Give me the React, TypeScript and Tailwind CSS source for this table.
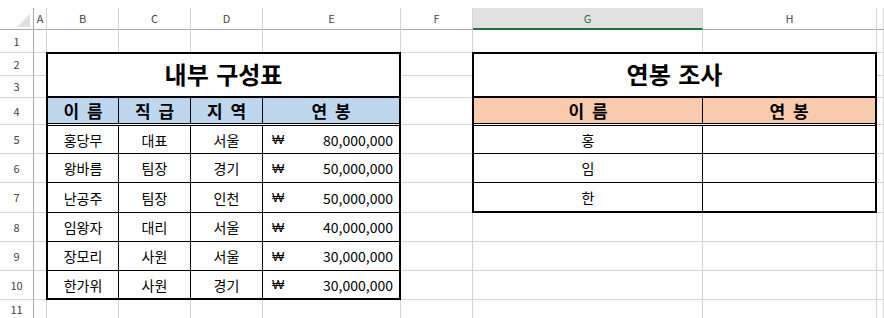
import React from "react";

const COL_START = [
  "col-start-1", "col-start-2", "col-start-3", "col-start-4", "col-start-5",
  "col-start-6", "col-start-7", "col-start-8", "col-start-9", "col-start-10",
];
const ROW_START = [
  "row-start-1", "row-start-2", "row-start-3", "row-start-4", "row-start-5", "row-start-6",
  "row-start-7", "row-start-8", "row-start-9", "row-start-10", "row-start-11", "row-start-12",
];

const LETTERS = ["A", "B", "C", "D", "E", "F", "G", "H", ""];
const ROWS = 11;

const staff = [
  { name: "홍당무", title: "대표", region: "서울", pay: "80,000,000" },
  { name: "왕바름", title: "팀장", region: "경기", pay: "50,000,000" },
  { name: "난공주", title: "팀장", region: "인천", pay: "50,000,000" },
  { name: "임왕자", title: "대리", region: "서울", pay: "40,000,000" },
  { name: "장모리", title: "사원", region: "서울", pay: "30,000,000" },
  { name: "한가위", title: "사원", region: "경기", pay: "30,000,000" },
];
// body row heights (incl. bottom border) so the lines fall on the sheet grid
const leftHeights = ["h-[28px]", "h-[29px]", "h-[30px]", "h-[29px]", "h-[29px]", "h-[27px]"];

const survey = ["홍", "임", "한"];
const rightHeights = ["h-[28px]", "h-[29px]", "h-[28px]"];

export default function App() {
  return (
    <div
      className="w-[884px] h-[318px] overflow-hidden bg-white text-black
                 font-['Noto_Sans_CJK_KR','Noto_Sans',sans-serif]
                 grid grid-cols-[34px_13px_72px_72px_72px_138px_72px_230px_174px_1fr]
                 grid-rows-[30px_23px_23px_22px_27px_29px_29px_30px_29px_29px_29px_18px]"
    >
      {/* corner */}
      <div className="col-start-1 row-start-1 flex flex-col">
        <div className="mt-2 flex-1 flex items-end justify-end pr-[3px] pb-[2px] border-r border-b border-[#ababab]">
          <svg width="13" height="13" viewBox="0 0 13 13">
            <polygon points="13,0 13,13 0,13" fill="#dfdfdf" />
          </svg>
        </div>
      </div>

      {/* column headings */}
      {LETTERS.map((l, i) => (
        <div key={"h" + i} className={`${COL_START[i + 1]} row-start-1 flex flex-col`}>
          <div
            className={
              l === "G"
                ? "mt-2 flex-1 flex items-center justify-center text-[11px] text-[#217346] bg-[#e1e1e1] border-r border-[#d4d4d4] border-b-2 border-b-[#217346]"
                : "mt-2 flex-1 flex items-center justify-center text-[11px] text-[#444] border-r border-[#d4d4d4] border-b border-b-[#ababab]"
            }
          >
            {l}
          </div>
        </div>
      ))}

      {/* row headings */}
      {Array.from({ length: ROWS }).map((_, r) => (
        <div
          key={"r" + r}
          className={`${ROW_START[r + 1]} col-start-1 flex items-center justify-center text-[11px] text-[#444]
                      border-r border-r-[#ababab] ${r < ROWS - 1 ? "border-b border-b-[#d4d4d4]" : ""}`}
        >
          {r + 1}
        </div>
      ))}

      {/* empty cells with gridlines */}
      {Array.from({ length: ROWS }).map((_, r) =>
        LETTERS.map((_, c) => (
          <div
            key={`c${r}-${c}`}
            className={`${ROW_START[r + 1]} ${COL_START[c + 1]} border-r border-[#d4d4d4] ${
              r < ROWS - 1 ? "border-b" : ""
            }`}
          />
        ))
      )}

      {/* 내부 구성표 */}
      <div className="col-start-3 col-end-7 row-start-3 row-end-12 -ml-px -mt-px z-10 bg-white border-2 border-black flex flex-col">
        <div className="h-[44px] shrink-0 border-b-2 border-black flex items-center justify-center pb-[3px] text-[24px] font-bold leading-none [word-spacing:2px]">
          내부 구성표
        </div>
        <div className="h-[28px] shrink-0 flex bg-[#bdd7ee] bg-clip-padding border-b-[3px] border-double border-black text-[17px] font-bold leading-none [word-spacing:4px]">
          <div className="w-[71px] border-r border-black flex items-center justify-center">이 름</div>
          <div className="w-[72px] border-r border-black flex items-center justify-center">직 급</div>
          <div className="w-[72px] border-r border-black flex items-center justify-center">지 역</div>
          <div className="flex-1 flex items-center justify-center">연 봉</div>
        </div>
        {staff.map((s, i) => (
          <div
            key={s.name}
            className={`${leftHeights[i]} shrink-0 flex text-[14px] leading-none ${
              i < staff.length - 1 ? "border-b border-black" : ""
            }`}
          >
            <div className="w-[71px] border-r border-black flex items-center justify-center">{s.name}</div>
            <div className="w-[72px] border-r border-black flex items-center justify-center">{s.title}</div>
            <div className="w-[72px] border-r border-black flex items-center justify-center">{s.region}</div>
            <div className="flex-1 flex items-center justify-between pl-[9px] pr-[6px]">
              <span className="text-[13px] font-['Liberation_Sans','Noto_Sans_CJK_KR',sans-serif]">₩</span>
              <span>{s.pay}</span>
            </div>
          </div>
        ))}
      </div>

      {/* 연봉 조사 */}
      <div className="col-start-8 col-end-10 row-start-3 row-end-9 -ml-px -mt-px z-10 bg-white border-2 border-black flex flex-col">
        <div className="h-[44px] shrink-0 border-b-2 border-black flex items-center justify-center pb-[3px] text-[24px] font-bold leading-none [word-spacing:2px]">
          연봉 조사
        </div>
        <div className="h-[28px] shrink-0 flex bg-[#f8cbad] bg-clip-padding border-b-[3px] border-double border-black text-[17px] font-bold leading-none [word-spacing:4px]">
          <div className="w-[229px] border-r border-black flex items-center justify-center">이 름</div>
          <div className="flex-1 flex items-center justify-center">연 봉</div>
        </div>
        {survey.map((n, i) => (
          <div
            key={n}
            className={`${rightHeights[i]} shrink-0 flex text-[14px] leading-none ${
              i < survey.length - 1 ? "border-b border-black" : ""
            }`}
          >
            <div className="w-[229px] border-r border-black flex items-center justify-center">{n}</div>
            <div className="flex-1" />
          </div>
        ))}
      </div>
    </div>
  );
}
